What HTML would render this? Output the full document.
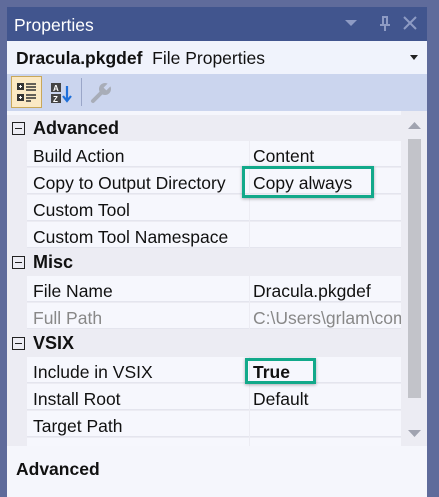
<!DOCTYPE html>
<html><head><style>
*{margin:0;padding:0;box-sizing:border-box}
body{width:439px;height:497px;background:#5f6b9b;font-family:"Liberation Sans",sans-serif;position:relative;overflow:hidden;color:#111}
.abs{position:absolute}
#panel{left:7px;top:7px;width:420px;height:490px;background:#f5f6fc}
#title{left:7px;top:7px;width:420px;height:34px;background:#41558e;color:#fff;font-size:17.5px;padding:8px 0 0 7px}
#sub{left:7px;top:41px;width:420px;height:33px;background:#f0f3fc;font-size:17.5px;padding:7px 0 0 9px}
#tb{left:7px;top:74px;width:420px;height:37px;background:#cbd5ee}
.row{position:absolute;left:7px;width:394px;height:27px;font-size:17.5px}
.cat{background:#ececf3;font-weight:bold;font-size:18px}
.prop{background:#ececf3}
.prop .l{position:absolute;left:20px;top:0;width:222px;height:26px;background:#f6f7fd;padding:5px 0 0 6px;border-bottom:1px solid #e4e5ee;white-space:nowrap;overflow:hidden}
.prop .v{position:absolute;left:243px;top:0;width:151px;height:26px;background:#f6f7fd;padding:5px 0 0 3px;border-bottom:1px solid #e4e5ee;white-space:nowrap;overflow:hidden}
.box{position:absolute;left:5px;top:7px;width:13px;height:13px;border:1px solid #222}
.box:after{content:"";position:absolute;left:2px;top:5px;width:7px;height:1px;background:#222}
.cat span{position:absolute;left:26px;top:3px}
.g{color:#888}
.hl{position:absolute;border:3px solid #12a98a;box-shadow:0 1px 3px rgba(0,0,0,.3)}
</style></head><body>
<div class="abs" id="panel"></div>
<div class="abs" id="title">Properties
<svg class="abs" style="left:338px;top:13px" width="12" height="7"><path d="M0 0H12L6 6Z" fill="#8e9bc4"/></svg>
<svg class="abs" style="left:372px;top:9px" width="12" height="16"><path d="M3 1H9M4 1V9M8 1V9M1 9H11M6 9V15" stroke="#8e9bc4" stroke-width="2" fill="none"/></svg>
<svg class="abs" style="left:396px;top:9px" width="14" height="14"><path d="M1 1L13 13M13 1L1 13" stroke="#8e9bc4" stroke-width="2"/></svg>
</div>
<div class="abs" id="sub"><b>Dracula.pkgdef</b>&nbsp; File Properties
<svg class="abs" style="left:403px;top:14px" width="8" height="6"><path d="M0 0H8L4 5Z" fill="#222"/></svg></div>
<div class="abs" id="tb">
<div class="abs" style="left:4px;top:2px;width:31px;height:32px;background:#fbe9c4;border:1px solid #c9a85a"></div>
<svg class="abs" style="left:9px;top:8px" width="22" height="22"><rect x="1" y="1" width="7" height="7" fill="#333"/><rect x="1" y="12" width="7" height="7" fill="#333"/><path d="M3 4.5H6M4.5 3V6M3 15.5H6M4.5 14V17" stroke="#fff"/><path d="M10 2H20M10 5H20M10 8H20M10 13H20M10 16H20M10 19H15" stroke="#333" stroke-width="1.5"/></svg>
<svg class="abs" style="left:43px;top:8px" width="26" height="22"><rect x="1" y="1" width="10" height="9" fill="#444"/><rect x="1" y="12" width="10" height="9" fill="#444"/><text x="3" y="9" font-size="8" fill="#fff" font-family="Liberation Sans" font-weight="bold">A</text><text x="3" y="20" font-size="8" fill="#fff" font-family="Liberation Sans" font-weight="bold">Z</text><path d="M17 4V18M13 14L17 19L21 14" stroke="#1e6fd9" stroke-width="2.2" fill="none"/></svg>
<div class="abs" style="left:74px;top:4px;width:1px;height:28px;background:#9aa6c8"></div>
<svg class="abs" style="left:82px;top:7px" width="24" height="24"><path d="M4 20L13 11" stroke="#a8adb8" stroke-width="4" stroke-linecap="round"/><circle cx="16" cy="8" r="6" fill="#a8adb8"/><path d="M16 8L22 2" stroke="#cbd5ee" stroke-width="4"/></svg>
</div>
<div class="row cat" style="top:115px;height:26px"><div class="box"></div><span>Advanced</span></div>
<div class="row prop" style="top:141px"><div class="l">Build Action</div><div class="v">Content</div></div>
<div class="row prop" style="top:168px"><div class="l">Copy to Output Directory</div><div class="v">Copy always</div></div>
<div class="row prop" style="top:195px"><div class="l">Custom Tool</div><div class="v"></div></div>
<div class="row prop" style="top:222px"><div class="l">Custom Tool Namespace</div><div class="v"></div></div>
<div class="row cat" style="top:249px"><div class="box"></div><span>Misc</span></div>
<div class="row prop" style="top:276px"><div class="l">File Name</div><div class="v">Dracula.pkgdef</div></div>
<div class="row prop" style="top:303px"><div class="l g">Full Path</div><div class="v g">C:\Users\grlam\com</div></div>
<div class="row cat" style="top:330px"><div class="box"></div><span>VSIX</span></div>
<div class="row prop" style="top:357px"><div class="l">Include in VSIX</div><div class="v"><b>True</b></div></div>
<div class="row prop" style="top:384px"><div class="l">Install Root</div><div class="v">Default</div></div>
<div class="row prop" style="top:411px"><div class="l">Target Path</div><div class="v"></div></div>
<div class="row prop" style="top:438px;height:8px;overflow:hidden"><div class="l"></div><div class="v"></div></div>
<div class="abs" style="left:401px;top:111px;width:26px;height:335px;background:#ececf3"></div>
<svg class="abs" style="left:408px;top:122px" width="13" height="8"><path d="M0 7H13L6.5 0Z" fill="#a0a3b0"/></svg>
<div class="abs" style="left:408px;top:139px;width:13px;height:259px;background:#c2c3c9"></div>
<svg class="abs" style="left:408px;top:430px" width="13" height="8"><path d="M0 0H13L6.5 7Z" fill="#a0a3b0"/></svg>
<div class="abs" style="left:7px;top:446px;width:420px;height:51px;background:#f5f6fc"></div>
<div class="abs" style="left:16px;top:459px;font-size:17.5px;font-weight:bold">Advanced</div>
<div class="hl" style="left:242px;top:166px;width:132px;height:32px"></div>
<div class="hl" style="left:245px;top:358px;width:71px;height:26px"></div>
</body></html>
